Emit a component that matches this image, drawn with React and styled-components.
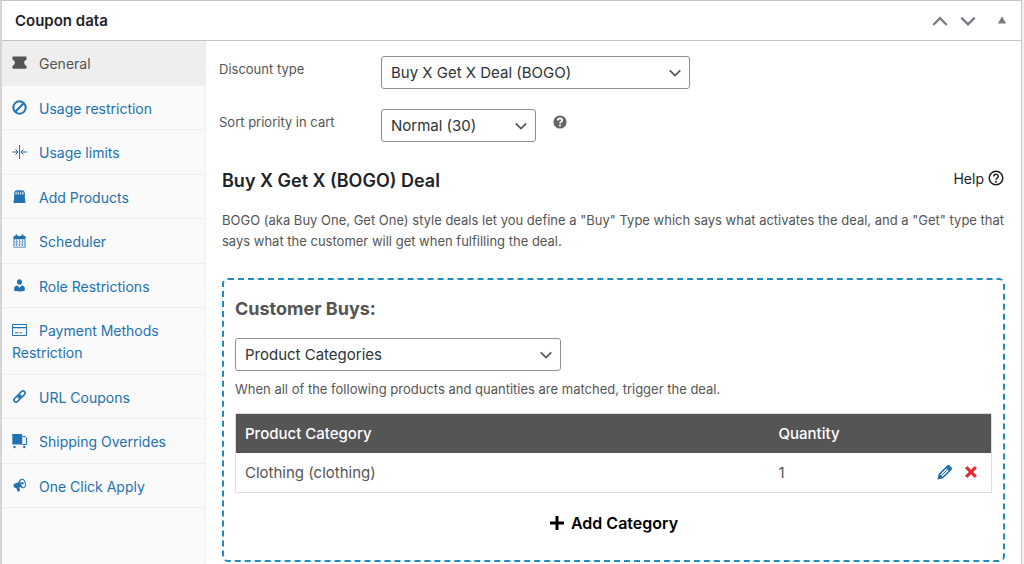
import React from "react";
import styled, { createGlobalStyle } from "styled-components";

const GlobalStyle = createGlobalStyle`
  *, *::before, *::after { box-sizing: border-box; }
  body {
    margin: 0;
    background: #f0f0f1;
    color: #555;
    font-family: Inter, "Liberation Sans", sans-serif;
    font-size: 13px;
  }
  h2, h3, p, ul { margin: 0; padding: 0; }
  button, select { font-family: inherit; }
`;

const Panel = styled.section`
  display: flex;
  flex-direction: column;
  min-height: 100vh;
  margin-right: 2px;
  background: #fff;
  border: 1px solid #c3c4c7;
  border-left: 2px solid #d5d5d8;
  border-bottom: 0;
`;

const PanelHeader = styled.header`
  display: flex;
  align-items: center;
  justify-content: space-between;
  height: 40px;
  padding: 0 11px 0 13px;
  border-bottom: 1px solid #c3c4c7;
`;

const PanelTitle = styled.h2`
  color: #1d2327;
  font-size: 15px;
  font-weight: 600;
  line-height: 20px;
`;

const HeaderActions = styled.div`
  display: flex;
  align-items: center;
`;

const IconButton = styled.button`
  display: flex;
  align-items: center;
  justify-content: center;
  width: ${(p) => p.$width || 28}px;
  height: 28px;
  padding: 0;
  border: 0;
  background: none;
  color: ${(p) => p.$color || "#787c82"};
  cursor: pointer;
`;

const CollapseButton = styled(IconButton)`
  margin-left: 12px;
`;

const Columns = styled.div`
  display: flex;
  flex: 1;
`;

const Sidebar = styled.nav`
  flex: 0 0 204px;
  background: #fafafa;
  border-right: 1px solid #eee;
`;

const TabList = styled.ul`
  list-style: none;
`;

const TabItem = styled.li`
  &:nth-child(even) a { padding-bottom: 9px; }
`;

const TabLink = styled.a`
  display: block;
  padding: 12px 10px 10px;
  border-bottom: 1px solid #eee;
  background: ${(p) => (p.$active ? "#eee" : "transparent")};
  color: ${(p) => (p.$active ? "#555" : "#2271b1")};
  font-size: 14px;
  line-height: 22px;
  text-decoration: none;

  svg {
    width: 16px;
    height: 16px;
    margin-right: 11px;
    vertical-align: -2px;
  }
`;

const Content = styled.main`
  flex: 1;
  min-width: 0;
  padding: 15px 16px 0 13px;
`;

const Field = styled.div`
  display: grid;
  grid-template-columns: 162px auto 1fr;
  margin-bottom: 20px;
`;

const FieldLabel = styled.label`
  font-size: 13px;
  line-height: 26px;
`;

const SelectBox = styled.div`
  display: grid;
  align-items: center;
  width: ${(p) => p.$width}px;
  max-width: 100%;

  select, svg { grid-area: 1 / 1; }
  svg {
    justify-self: end;
    margin-right: 8px;
    color: #50575e;
    pointer-events: none;
  }
`;

const SelectInput = styled.select`
  appearance: none;
  width: 100%;
  height: 33px;
  padding: 0 28px 0 9px;
  border: 1px solid #8c8f94;
  border-radius: 3px;
  background: #fff;
  color: #2c3338;
  font-size: 15px;
`;

const Tip = styled.span`
  display: flex;
  align-items: center;
  height: 26px;
  margin-left: 17px;
  color: #666;
`;

const Deal = styled.section`
  margin-left: 3px;
`;

const DealHeader = styled.div`
  display: flex;
  align-items: flex-start;
  justify-content: space-between;
  padding: 7px 1px 0 0;
`;

const DealTitle = styled.h2`
  color: #1d2327;
  font-size: 18px;
  font-weight: 600;
  line-height: 24px;
`;

const HelpLink = styled.a`
  color: #1d1d1d;
  font-size: 14px;
  line-height: 20px;
  text-decoration: none;

  svg {
    margin-left: 4px;
    vertical-align: -2px;
  }
`;

const Description = styled.p`
  font-size: 13px;
  line-height: 21px;
`;

const DealDescription = styled(Description)`
  margin-top: 17px;
`;

const DealBox = styled.section`
  display: flex;
  flex-direction: column;
  margin-top: 26px;
  padding: 17px 11px 26px;
  border: 2px dashed #1e8cbe;
  border-radius: 6px;
`;

const BoxTitle = styled.h3`
  margin-bottom: 17px;
  font-size: 18px;
  font-weight: 700;
  line-height: 24px;
`;

const BoxDescription = styled(Description)`
  margin: 8px 0 13px;
`;

const Table = styled.table`
  width: 100%;
  border-collapse: collapse;
  table-layout: fixed;
  border: 1px solid #ddd;
  font-size: 15px;
  line-height: 21px;
  text-align: left;

  th, td { padding: 0 9px; }
  th { height: 39px; background: #555; color: #fff; font-weight: 500; }
  td { height: 40px; }
`;

const Column = styled.col`
  width: ${(p) => p.$width};
`;

const RowActions = styled.div`
  display: flex;
  justify-content: flex-end;
  margin-right: -2px;
`;

const AddButton = styled.button`
  display: flex;
  align-self: center;
  align-items: center;
  gap: 6px;
  margin-top: 20px;
  padding: 0;
  border: 0;
  background: none;
  color: #000;
  font-size: 16px;
  font-weight: 600;
  line-height: 21px;
  cursor: pointer;
`;

const Svg = ({ size = 16, box = 16, children }) => (
  <svg width={size} height={size} viewBox={`0 0 ${box} ${box}`} fill="currentColor" aria-hidden="true">
    {children}
  </svg>
);

const Chevron = ({ up, size = 16 }) => (
  <Svg size={size}>
    <path
      d={up ? "M2 11.5 8 5.5l6 6" : "M2 5 8 11l6-6"}
      fill="none"
      stroke="currentColor"
      strokeWidth="2"
    />
  </Svg>
);

const icons = {
  ticket: (
    <path d="M.5 1.500h14v3.200c-1.600.5-2.300 1.500-2.300 2.900s.7 2.600 2.300 3.200v3H.5v-3c1.600-.6 2.300-1.800 2.300-3.200S2.100 5.200.5 4.700z" />
  ),
  forbidden: (
    <g fill="none" stroke="currentColor" strokeWidth="2">
      <circle cx="7.500" cy="7.500" r="6.200" />
      <path d="M3.300 11.700 11.700 3.300" />
    </g>
  ),
  limits: (
    <g fill="none" stroke="currentColor" strokeWidth="1">
      <path d="M7.500 1v14M0 8h5.500M9.500 8H15M3.500 5.500 6 8l-2.500 2.500M11.500 5.500 9 8l2.500 2.500" />
    </g>
  ),
  bag: (
    <>
      <path d="M2.500 5.500h10L13.500 14h-12z" />
      <path d="M2.800 7V4.200C3 1 7.300 1 7.500 4.200V7M7.500 7V4.200C7.700 1 12 1 12.200 4.200V7M5.200 6V3.500C5.500.8 9.500.8 9.800 3.500V6" fill="none" stroke="currentColor" strokeWidth="1.200" />
    </>
  ),
  calendar: (
    <>
      <path fillRule="evenodd" d="M1.500 3h12v11.500h-12zM2.300 6.300v7.400h10.400V6.300z" />
      <path d="M3.500 1.500h2V4h-2zM9.500 1.500h2V4h-2z" />
      <path d="M4.500 6.500v7M7.500 6.500v7M10.500 6.500v7M2 8.800h11M2 11.200h11" fill="none" stroke="currentColor" strokeWidth=".7" strokeDasharray="1.700 .7" />
    </>
  ),
  user: (
    <>
      <ellipse cx="7.500" cy="4" rx="2.500" ry="2.800" />
      <path d="M2.200 12.500v-2.300c0-1.700 1.500-2.500 3.300-2.700l2 2.300 2-2.300c1.800.2 3.300 1 3.300 2.700v2.300c-2 1.200-8.600 1.200-10.600 0z" />
    </>
  ),
  card: (
    <>
      <path d="M.5 2.500h14v11H.5z" fill="none" stroke="currentColor" />
      <path d="M1 5h13v1.200H1zM3 10.300h3.500v1H3zM7.500 10.300H10v1H7.500z" />
    </>
  ),
  link: (
    <g fill="none" stroke="currentColor" strokeWidth="1.600" transform="rotate(-45 7.500 7.500)">
      <rect x="0.500" y="5.400" width="7.500" height="4.200" rx="2.100" />
      <rect x="7" y="5.400" width="7.500" height="4.200" rx="2.100" />
      <path d="M5 7.500h5" strokeWidth="1.200" />
    </g>
  ),
  truck: (
    <>
      <path d="M.3 1h10v10.500H.3z" />
      <path d="M10.500 3.500h2.700L14.500 5v6.500h-4" fill="none" stroke="currentColor" />
      <circle cx="2.500" cy="14" r="1.200" />
      <circle cx="12.300" cy="14" r="1.200" />
    </>
  ),
  megaphone: (
    <>
      <path d="M1.500 8C1.300 6.300 2.300 5.500 3.800 5.200 5.800 4.800 7.400 3.700 8.600 1.200c-.8 3 .2 6 2.600 8.500-1.500-.7-2.700-.8-3.800-.5L8 13l-2.300.8-1.400-3.900C2.800 10 1.700 9.500 1.500 8z" />
      <ellipse cx="10.500" cy="5.500" rx="2.800" ry="4.300" fill="none" stroke="currentColor" strokeWidth="1" transform="rotate(-14 10.500 5.500)" />
      <circle cx="10.300" cy="5.300" r="1.300" />
    </>
  ),
};

const tabs = [
  ["General", "ticket"],
  ["Usage restriction", "forbidden"],
  ["Usage limits", "limits"],
  ["Add Products", "bag"],
  ["Scheduler", "calendar"],
  ["Role Restrictions", "user"],
  ["Payment Methods Restriction", "card"],
  ["URL Coupons", "link"],
  ["Shipping Overrides", "truck"],
  ["One Click Apply", "megaphone"],
];

function Select({ id, width, options, label }) {
  return (
    <SelectBox $width={width}>
      <SelectInput id={id} aria-label={label}>
        {options.map((o) => (
          <option key={o}>{o}</option>
        ))}
      </SelectInput>
      <Chevron size={14} />
    </SelectBox>
  );
}

export default function App() {
  return (
    <>
      <GlobalStyle />
      <Panel>
        <PanelHeader>
          <PanelTitle>Coupon data</PanelTitle>
          <HeaderActions>
            <IconButton aria-label="Move up"><Chevron up size={18} /></IconButton>
            <IconButton aria-label="Move down"><Chevron size={18} /></IconButton>
            <CollapseButton $width={16} aria-label="Toggle panel">
              <Svg size={10} box={10}><path d="M5 .5 9.200 7.500H.8z" /></Svg>
            </CollapseButton>
          </HeaderActions>
        </PanelHeader>
        <Columns>
          <Sidebar>
            <TabList>
              {tabs.map(([name, icon], i) => (
                <TabItem key={name}>
                  <TabLink href="#" $active={i === 0}>
                    <Svg>{icons[icon]}</Svg>
                    {name}
                  </TabLink>
                </TabItem>
              ))}
            </TabList>
          </Sidebar>
          <Content>
            <Field>
              <FieldLabel htmlFor="discount-type">Discount type</FieldLabel>
              <Select id="discount-type" width={309} options={["Buy X Get X Deal (BOGO)"]} />
            </Field>
            <Field>
              <FieldLabel htmlFor="priority">Sort priority in cart</FieldLabel>
              <Select id="priority" width={155} options={["Normal (30)"]} />
              <Tip>
                <Svg size={14}>
                  <circle cx="8" cy="8" r="7.500" />
                  <path d="M5.500 6.200c0-3.200 5-3.100 5-.2 0 1.800-2.500 1.900-2.500 3.600" fill="none" stroke="#fff" strokeWidth="2" />
                  <circle cx="8" cy="12" r="1.200" fill="#fff" />
                </Svg>
              </Tip>
            </Field>
            <Deal>
              <DealHeader>
                <DealTitle>Buy X Get X (BOGO) Deal</DealTitle>
                <HelpLink href="#">
                  Help
                  <Svg>
                    <circle cx="8" cy="8" r="6.800" fill="none" stroke="currentColor" strokeWidth="1.500" />
                    <path d="M5.800 6.500c0-3 4.400-2.900 4.400-.2C10.200 8 8 8 8 9.700" fill="none" stroke="currentColor" strokeWidth="1.500" />
                    <circle cx="8" cy="11.800" r="1" />
                  </Svg>
                </HelpLink>
              </DealHeader>
              <DealDescription>
                BOGO (aka Buy One, Get One) style deals let you define a "Buy" Type which says what
                activates the deal, and a "Get" type that says what the customer will get when
                fulfilling the deal.
              </DealDescription>
              <DealBox>
                <BoxTitle>Customer Buys:</BoxTitle>
                <Select label="Customer buys" width={326} options={["Product Categories"]} />
                <BoxDescription>
                  When all of the following products and quantities are matched, trigger the deal.
                </BoxDescription>
                <Table>
                  <colgroup>
                    <Column />
                    <Column $width="112px" />
                    <Column $width="110px" />
                  </colgroup>
                  <thead>
                    <tr>
                      <th>Product Category</th>
                      <th colSpan={2}>Quantity</th>
                    </tr>
                  </thead>
                  <tbody>
                    <tr>
                      <td>Clothing (clothing)</td>
                      <td>1</td>
                      <td>
                        <RowActions>
                          <IconButton $width={26} $color="#2271b1" aria-label="Edit">
                            <Svg>
                              <path fillRule="evenodd" d="M10.300 1.200q1-1 2 0l2.500 2.500q1 1 0 2L6.200 14.300.5 15.500 1.700 9.800zM3.300 10.500l2.200 2.200 6-6-2.200-2.200z" />
                              <path d="m4.400 11.600 6-6" stroke="currentColor" strokeWidth="1" />
                            </Svg>
                          </IconButton>
                          <IconButton $width={26} $color="#dc3232" aria-label="Remove">
                            <Svg size={14}>
                              <path d="m2.500 2.500 11 11m0-11-11 11" fill="none" stroke="currentColor" strokeWidth="3.800" />
                            </Svg>
                          </IconButton>
                        </RowActions>
                      </td>
                    </tr>
                  </tbody>
                </Table>
                <AddButton>
                  <Svg><path d="M6.500 0h3v5.500H15v3H9.500V14h-3V8.500H1v-3h5.500z" /></Svg>
                  Add Category
                </AddButton>
              </DealBox>
            </Deal>
          </Content>
        </Columns>
      </Panel>
    </>
  );
}
